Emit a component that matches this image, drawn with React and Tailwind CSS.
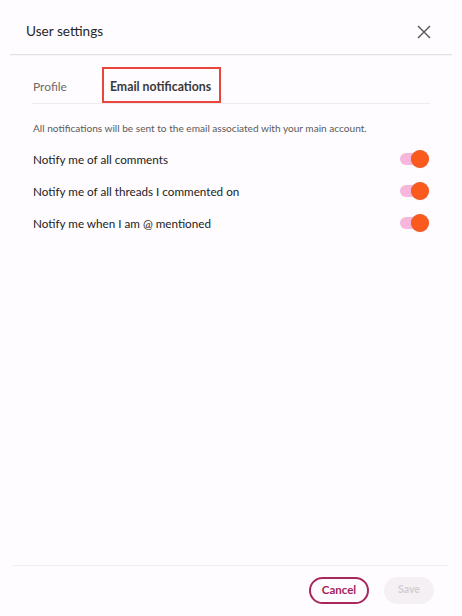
import React from "react";

function Toggle() {
  return (
    <div className="relative w-[30px] h-[18px] flex items-center">
      <div className="absolute left-[1px] w-[24px] h-[12px] rounded-full bg-[#f7b6dc]" />
      <div className="absolute right-0 w-[18px] h-[18px] rounded-full bg-[#fa5a1e] shadow-[0_0_1px_rgba(0,0,0,0.3)]" />
    </div>
  );
}

export default function App() {
  const rows = [
    "Notify me of all comments",
    "Notify me of all threads I commented on",
    "Notify me when I am @ mentioned",
  ];
  return (
    <div
      className="w-[462px] h-[616px] bg-[#fefcfe] flex flex-col text-[#2b2b2b]"
      style={{ fontFamily: "Lato, 'Noto Sans', sans-serif" }}
    >
      <div className="h-[54px] flex items-center justify-between pl-[26px] pr-[31px] pt-[9px]">
        <span className="text-[13.6px] text-[#262626]">User settings</span>
        <svg width="14" height="14" viewBox="0 0 14 14" className="text-[#555]">
          <path d="M1 1L13 13M13 1L1 13" stroke="currentColor" strokeWidth="1.4" />
        </svg>
      </div>
      <div className="mx-[10px] h-px bg-[#e4e1e4] shadow-[0_1px_1px_rgba(0,0,0,0.04)]" />
      <div className="mx-[32px] mt-[12px] flex items-center border-b border-[#ecebef] h-[37px]">
        <span className="text-[12px] text-[#6b6b6b] pl-[1px] pt-[4px]">Profile</span>
        <div className="ml-[35px] h-[36px] pl-[6px] pr-[8px] pt-[4px] border-2 border-[#e8453c] flex items-center">
          <span className="text-[12.3px] font-bold text-[#3a3a3a]">Email notifications</span>
        </div>
      </div>
      <div className="mx-[33px] mt-[17px] text-[10.1px] text-[#5a5a5a]">
        All notifications will be sent to the email associated with your main account.
      </div>
      <div className="mx-[33px] mt-[7px] flex flex-col">
        {rows.map((r) => (
          <div key={r} className="h-[32px] flex items-center justify-between">
            <span className="text-[11.7px] text-[#222] pt-[2px]">{r}</span>
            <Toggle />
          </div>
        ))}
      </div>
      <div className="flex-1" />
      <div className="mx-[13px] h-px bg-[#f1edf1]" />
      <div className="h-[50px] flex items-center justify-end pr-[28px] gap-[15px] pb-[2px]">
        <button className="h-[27px] w-[60px] rounded-full border-2 border-[#a8285e] text-[#a41e5a] text-[11.5px] font-bold flex items-center justify-center">
          Cancel
        </button>
        <button className="h-[27px] w-[50px] rounded-full bg-[#f4f0f4] text-[#d2cdd2] text-[10.5px] font-bold flex items-center justify-center">
          Save
        </button>
      </div>
    </div>
  );
}
